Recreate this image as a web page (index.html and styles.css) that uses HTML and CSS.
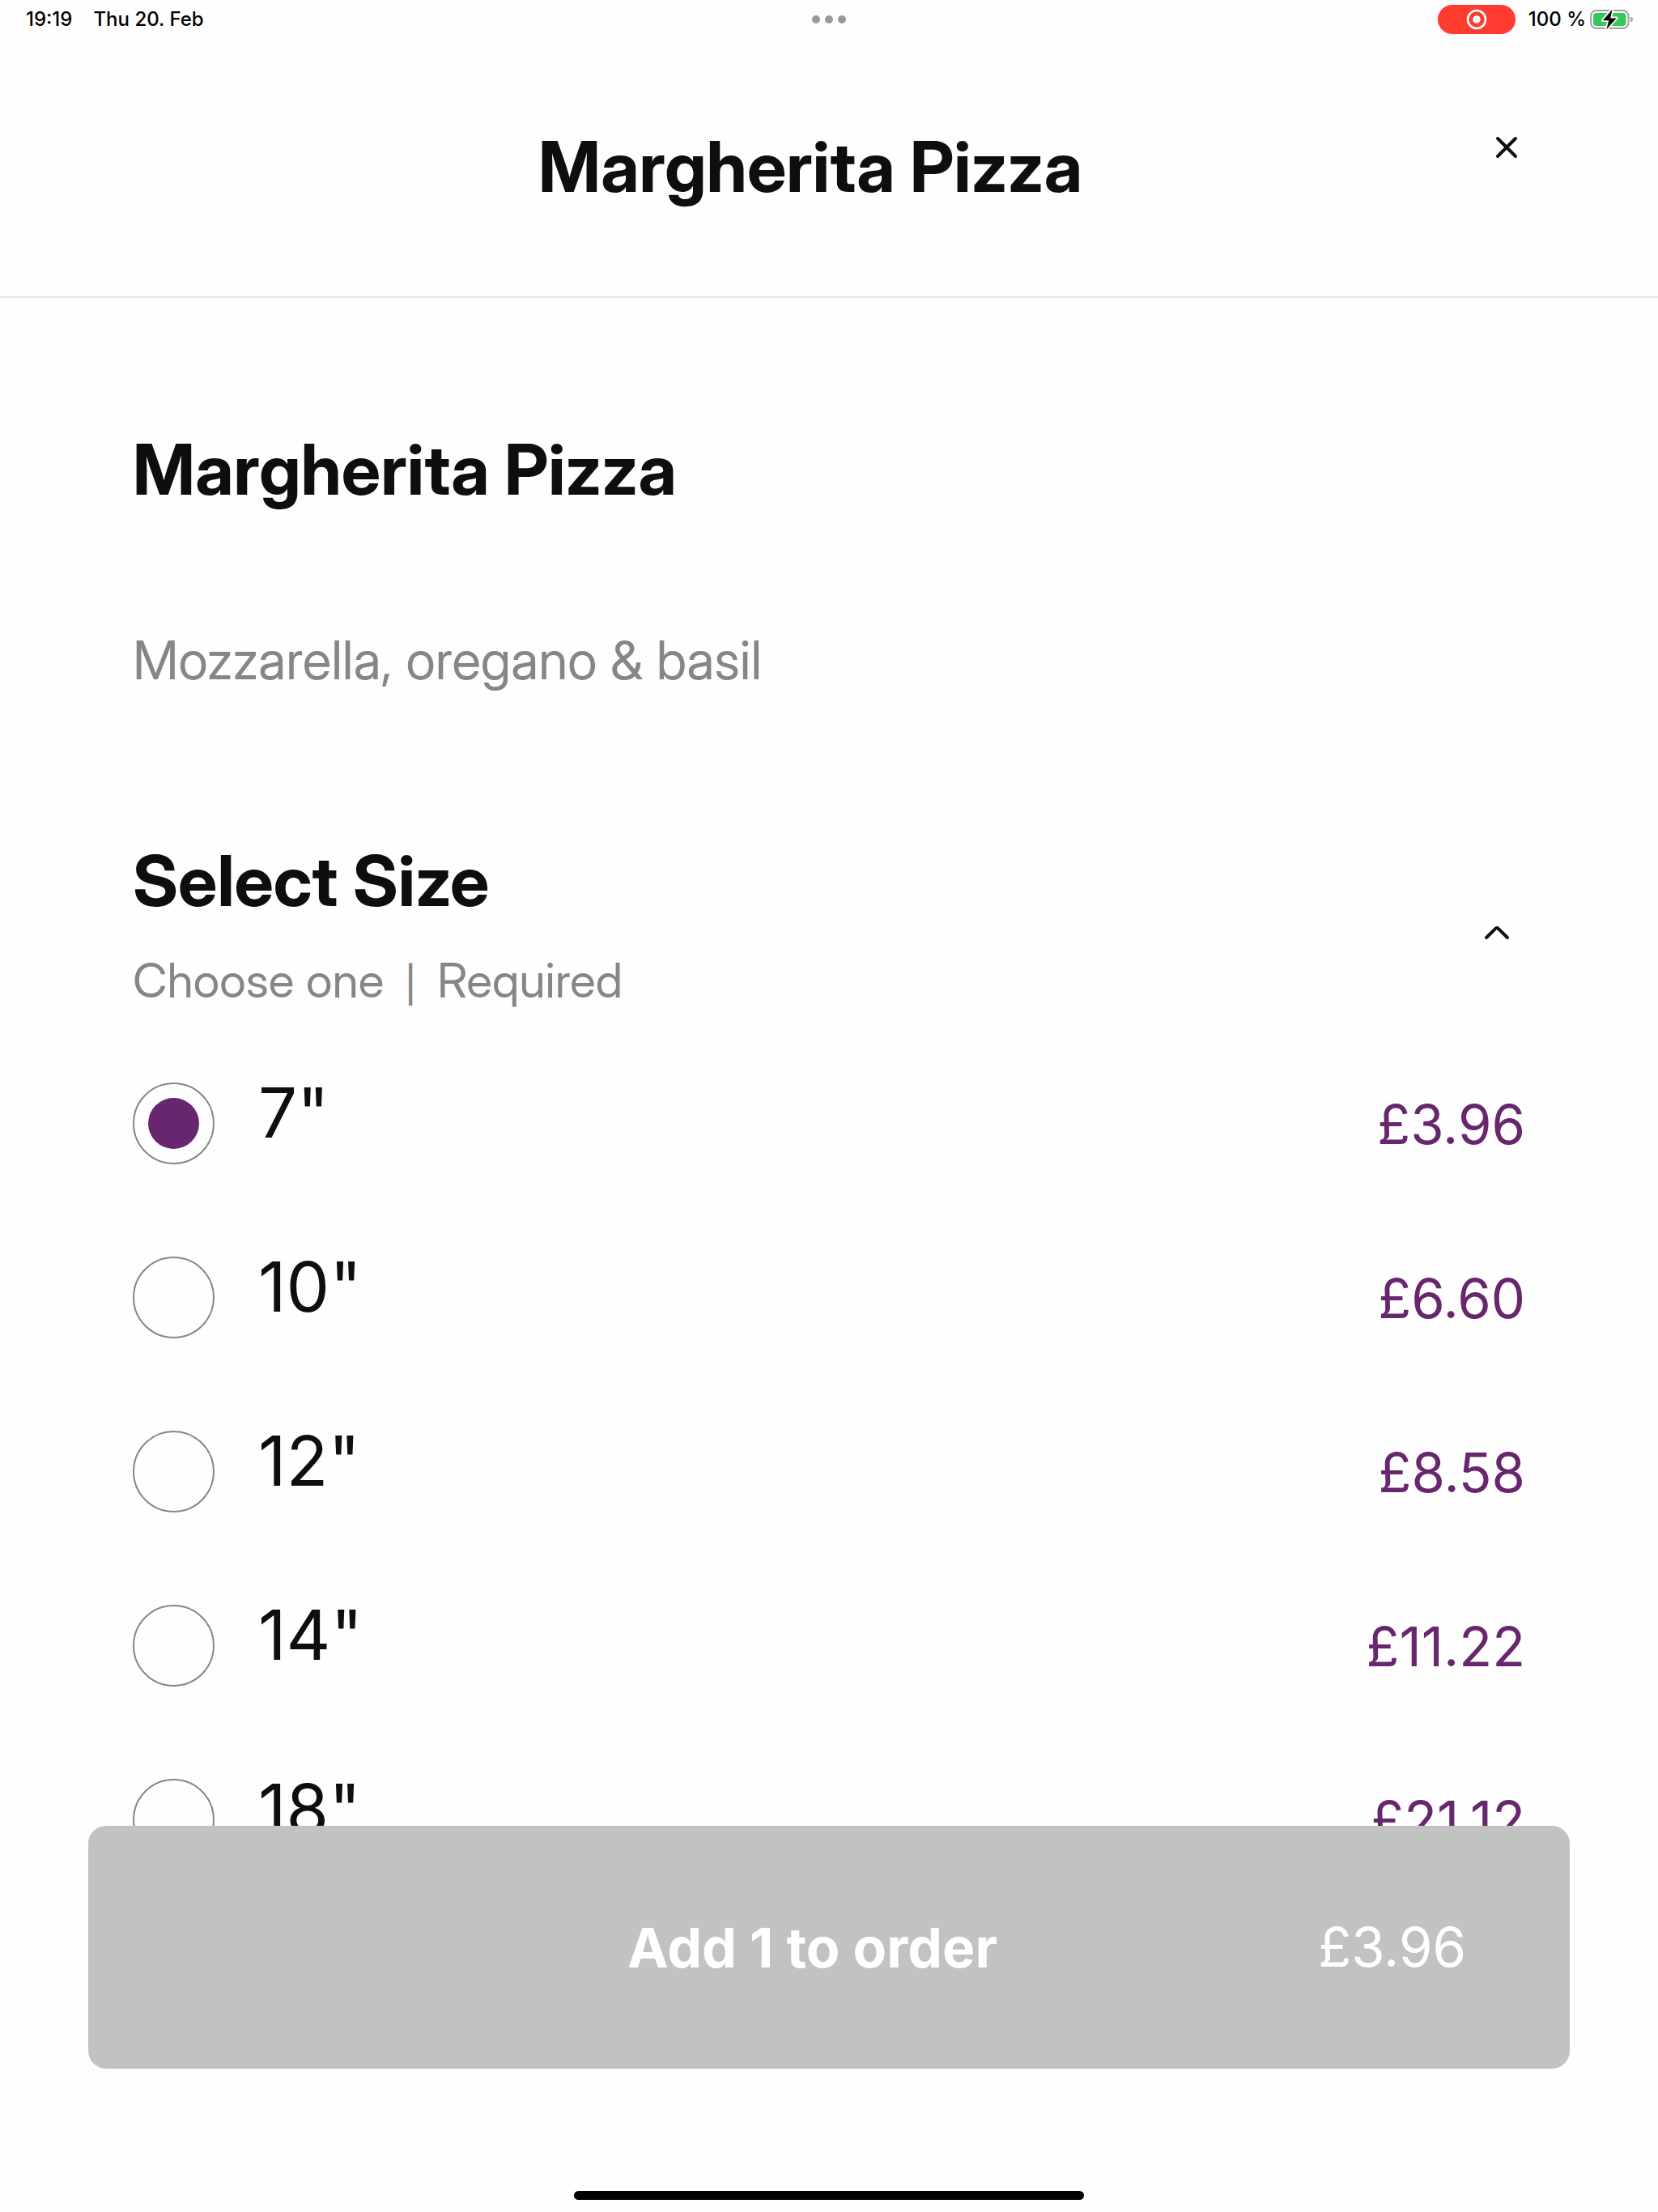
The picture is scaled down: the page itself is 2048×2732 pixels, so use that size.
FILE: index.html
```html
<!DOCTYPE html>
<html lang="en">
<head>
  <meta charset="utf-8">
  <meta name="viewport" content="width=device-width, initial-scale=1">
  <title>Margherita Pizza</title>
  <link rel="stylesheet" href="styles.css">
</head>
<body>
  <div class="status-bar">
    <div class="status-left">
      <span>19:19</span>
      <span>Thu 20. Feb</span>
    </div>
    <svg class="status-dots" viewBox="0 0 42 10" aria-hidden="true">
      <circle cx="5" cy="5" r="5"/><circle cx="21" cy="5" r="5"/><circle cx="37" cy="5" r="5"/>
    </svg>
    <div class="status-right">
      <span class="recording">
        <svg viewBox="0 0 26 26" aria-hidden="true">
          <circle cx="13" cy="13" r="11" fill="none" stroke="#fff" stroke-width="2.6"/>
          <circle cx="13" cy="13" r="4.8" fill="#fff"/>
        </svg>
      </span>
      <span class="battery-level">100 %</span>
      <svg class="battery" viewBox="0 0 54 26" aria-hidden="true">
        <rect x="1" y="2" width="46.5" height="22" rx="7" fill="none" stroke="#a0a0a0" stroke-width="2"/>
        <path d="M50 9.5c2.200 .7 3 2 3 3.500s-.8 2.800-3 3.500z" fill="#a0a0a0"/>
        <rect x="4" y="5" width="40.500" height="16" rx="4" fill="#34c759"/>
        <path d="M27.500 .8 15.800 14.200h7.400L20.300 25.200 32.800 11.400h-7.500z" fill="#000" stroke="#fff" stroke-width="3.600" stroke-linejoin="round" paint-order="stroke"/>
      </svg>
    </div>
  </div>

  <header class="sheet-header">
    <h1 class="heading sheet-title">Margherita Pizza</h1>
    <button class="icon-button close-button" type="button" aria-label="Close">
      <svg width="28" height="28" viewBox="0 0 28 28" aria-hidden="true"><path d="M3 3 25 25M25 3 3 25"/></svg>
    </button>
  </header>

  <main class="content">
    <h2 class="heading">Margherita Pizza</h2>
    <p class="description">Mozzarella, oregano &amp; basil</p>

    <section class="option-group">
      <div class="group-header">
        <div>
          <h2 class="heading" id="size-heading">Select Size</h2>
          <p class="group-hint"><span>Choose one</span><span class="separator">|</span><span>Required</span></p>
        </div>
        <button class="icon-button collapse-button" type="button" aria-label="Collapse sizes" aria-expanded="true">
          <svg width="32" height="20" viewBox="0 0 32 20" aria-hidden="true"><path d="M3 16 14.600 4.600Q16 3.400 17.400 4.600L29 16"/></svg>
        </button>
      </div>

      <div class="options" role="radiogroup" aria-labelledby="size-heading">
        <label class="option"><input class="radio" type="radio" name="size" checked><span class="option-name">7"</span><span class="price">£3.96</span></label>
        <label class="option"><input class="radio" type="radio" name="size"><span class="option-name">10"</span><span class="price">£6.60</span></label>
        <label class="option"><input class="radio" type="radio" name="size"><span class="option-name">12"</span><span class="price">£8.58</span></label>
        <label class="option"><input class="radio" type="radio" name="size"><span class="option-name">14"</span><span class="price">£11.22</span></label>
        <label class="option"><input class="radio" type="radio" name="size"><span class="option-name">18"</span><span class="price">£21.12</span></label>
      </div>
    </section>
  </main>

  <footer class="order-bar">
    <button class="add-button" type="button">
      <span class="add-label">Add 1 to order</span>
      <span class="add-price">£3.96</span>
    </button>
    <div class="home-indicator"></div>
  </footer>
</body>
</html>
```
FILE: styles.css
```css
* {
  box-sizing: border-box;
}

body {
  margin: 0;
  min-height: 100vh;
  background: #fefefe;
  color: #0e0e0e;
  font-family: Inter, "Liberation Sans", sans-serif;
}

h1, h2, p {
  margin: 0;
}

button {
  border: 0;
  padding: 0;
  background: none;
  color: inherit;
  font: inherit;
}

/* Status bar */
.status-bar {
  display: grid;
  grid-template-columns: 1fr auto 1fr;
  align-items: center;
  height: 48px;
  padding: 0 30px;
  color: #000;
  font-size: 24px;
  font-weight: 500;
  line-height: 32px;
}

.status-left {
  display: flex;
  gap: 26px;
  padding-left: 2px;
}

.status-dots {
  width: 42px;
  height: 10px;
  fill: #999;
}

.status-right {
  display: flex;
  align-items: center;
  justify-content: flex-end;
}

.recording {
  display: flex;
  align-items: center;
  justify-content: center;
  width: 96px;
  height: 36px;
  border-radius: 18px;
  background: #ff3b30;
}

.recording svg {
  width: 26px;
  height: 26px;
}

.battery-level {
  margin: 0 5px 0 16px;
}

.battery {
  width: 54px;
  height: 26px;
}

/* Sheet header */
.sheet-header {
  display: flex;
  align-items: flex-start;
  padding: 106px 164px 108px;
  border-bottom: 2px solid #e5e5e5;
}

.heading,
.description,
.group-hint {
  font-family: "Inter Display", Inter, "Liberation Sans", sans-serif;
}

.heading {
  font-size: 86px;
  font-weight: 700;
  line-height: 104px;
}

.sheet-title {
  flex: 1;
  text-align: center;
}

.icon-button {
  display: flex;
  align-items: center;
  justify-content: center;
  flex: none;
  height: 56px;
}

.icon-button path {
  fill: none;
  stroke: #0e0e0e;
  stroke-width: 4;
  stroke-linecap: round;
  stroke-linejoin: round;
}

.close-button {
  width: 46px;
}

.collapse-button {
  width: 70px;
  margin-top: 20px;
}

/* Item details */
.content {
  padding: 160px 164px 0;
}

.description {
  margin-top: 143px;
  color: #868686;
  font-size: 66px;
  line-height: 80px;
}

.option-group {
  margin-top: 181px;
}

.group-header {
  display: flex;
  align-items: center;
  justify-content: space-between;
}

.group-hint {
  display: flex;
  align-items: baseline;
  gap: 26px;
  margin-top: 35px;
  color: #868686;
  font-size: 59px;
  line-height: 72px;
}

.separator {
  font-size: 44px;
  font-weight: 500;
  line-height: 44px;
}

/* Size options */
.options {
  display: flex;
  flex-direction: column;
  gap: 100px;
  margin-top: 76px;
}

.option {
  display: flex;
  align-items: flex-start;
}

.radio {
  appearance: none;
  display: grid;
  place-items: center;
  flex: none;
  width: 101px;
  height: 101px;
  margin: 14px 54px 0 0;
  border: 2px solid #868686;
  border-radius: 50%;
}

.radio:checked::before {
  content: "";
  width: 63px;
  height: 63px;
  border-radius: 50%;
  background: #67266d;
}

.option-name {
  flex: 1;
  font-size: 85px;
  line-height: 104px;
}

.price {
  margin-top: 26px;
  color: #67266d;
  font-size: 67px;
  line-height: 80px;
}

/* Pinned order bar */
.order-bar {
  position: fixed;
  right: 0;
  bottom: 0;
  left: 0;
  display: flex;
  flex-direction: column;
  gap: 151px;
  padding: 0 109px 15px;
}

.add-button {
  display: flex;
  align-items: center;
  height: 300px;
  padding: 0 128px;
  border-radius: 22px;
  background: #c2c2c2;
  color: #fff;
  font-size: 67px;
  line-height: 80px;
}

.add-label {
  flex: 1;
  padding-left: 142px;
  font-size: 68px;
  font-weight: 700;
  text-align: center;
}

.home-indicator {
  align-self: center;
  width: 630px;
  height: 11px;
  border-radius: 6px;
  background: #000;
}
```
